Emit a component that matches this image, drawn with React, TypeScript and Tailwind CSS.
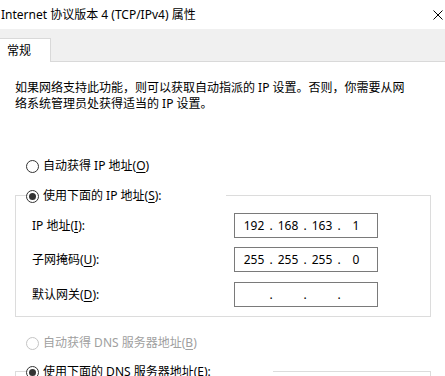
import React from "react";

const FONT = '"Noto Sans", "Noto Sans CJK SC", sans-serif';

function Radio({ checked, disabled }: { checked?: boolean; disabled?: boolean }) {
  return (
    <span
      className={`inline-flex h-[13px] w-[13px] shrink-0 items-center justify-center rounded-full border bg-white ${
        disabled ? "border-[#c4c4c4]" : "border-[#333333]"
      }`}
    >
      {checked && <span className="h-[7px] w-[7px] rounded-full bg-[#333333]" />}
    </span>
  );
}

function IpBox({ parts }: { parts: string[] }) {
  return (
    <div className="flex h-[25px] w-[144px] items-center border border-[#7a7a7a] bg-white px-[4px] text-[12px] text-black">
      {parts.map((p, i) => (
        <React.Fragment key={i}>
          <span className="w-[30px] text-center leading-[16px]">{p}</span>
          {i < 3 && <span className="w-[4px] text-center leading-[16px]">.</span>}
        </React.Fragment>
      ))}
    </div>
  );
}

function U({ c }: { c: string }) {
  return <span className="underline underline-offset-2">{c}</span>;
}

export default function App() {
  return (
    <div
      className="h-[376px] w-[445px] overflow-hidden bg-white text-[12px] text-black"
      style={{ fontFamily: FONT }}
    >
      {/* Title bar */}
      <div className="flex h-[29px] items-center justify-between pl-[1px] pr-[2px]">
        <span className="leading-[16px]">Internet 协议版本 4 (TCP/IPv4) 属性</span>
        <svg width="10" height="10" viewBox="0 0 10 10" className="mr-[0px]">
          <path d="M0.5 0.5 L9.5 9.5 M9.5 0.5 L0.5 9.5" stroke="#000" strokeWidth="1" />
        </svg>
      </div>

      {/* Tab strip */}
      <div className="flex h-[33px] items-end border-b border-[#d9d9d9] bg-[#f0f0f0]">
        <div className="-mb-px flex h-[24px] w-[51px] items-center border-r border-t border-[#d9d9d9] bg-white pl-[7px]">
          <span className="leading-[16px]">常规</span>
        </div>
      </div>

      {/* Content */}
      <div className="pl-[15px] pr-[14px]">
        <p className="mt-[18px] leading-[16px]">
          如果网络支持此功能，则可以获取自动指派的 IP 设置。否则，你需要从网
          <br />
          络系统管理员处获得适当的 IP 设置。
        </p>

        <div className="mt-[44px] flex h-[20px] items-center gap-[4px] pl-[11px]">
          <Radio />
          <span className="leading-[16px]">
            自动获得 IP 地址(<U c="O" />)
          </span>
        </div>

        {/* Group box 1 */}
        <div className="relative mt-[19px] border border-[#dcdcdc] pb-[9px] pl-[16px] pt-[17px]">
          <div className="absolute left-[10px] top-[-10px] flex h-[20px] w-[200px] items-center gap-[4px] bg-white">
            <Radio checked />
            <span className="leading-[16px]">
              使用下面的 IP 地址(<U c="S" />):
            </span>
          </div>
          <div className="flex items-center">
            <span className="w-[202px] leading-[16px]">
              IP 地址(<U c="I" />):
            </span>
            <IpBox parts={["192", "168", "163", "1"]} />
          </div>
          <div className="mt-[9px] flex items-center">
            <span className="w-[202px] leading-[16px]">
              子网掩码(<U c="U" />):
            </span>
            <IpBox parts={["255", "255", "255", "0"]} />
          </div>
          <div className="mt-[10px] flex items-center">
            <span className="w-[202px] leading-[16px]">
              默认网关(<U c="D" />):
            </span>
            <IpBox parts={["", "", "", ""]} />
          </div>
        </div>

        <div className="mt-[16px] flex h-[20px] items-center gap-[4px] pl-[11px] text-[#a0a0a0]">
          <Radio disabled />
          <span className="leading-[16px]">
            自动获得 DNS 服务器地址(<U c="B" />)
          </span>
        </div>

        {/* Group box 2 */}
        <div className="relative mt-[18px] h-[80px] border border-[#dcdcdc]">
          <div className="absolute left-[10px] top-[-10px] flex h-[20px] w-[247px] items-center gap-[4px] bg-white">
            <Radio checked />
            <span className="leading-[16px]">
              使用下面的 DNS 服务器地址(<U c="E" />):
            </span>
          </div>
        </div>
      </div>
    </div>
  );
}
